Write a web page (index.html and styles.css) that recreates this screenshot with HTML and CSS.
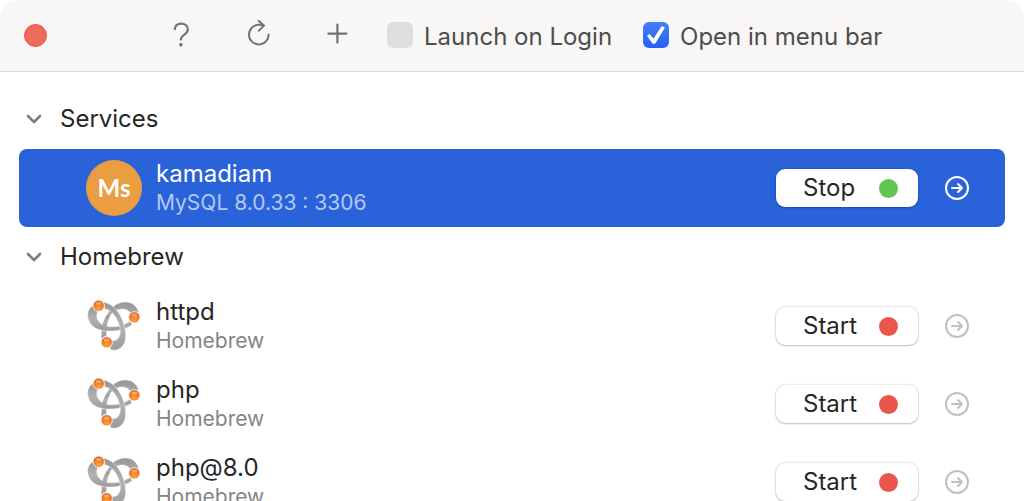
FILE: index.html
```html
<!DOCTYPE html>
<html lang="en">
<head>
<meta charset="utf-8">
<meta name="viewport" content="width=device-width, initial-scale=1">
<title>Services</title>
<link rel="stylesheet" href="styles.css">
</head>
<body>
<svg class="symbols" aria-hidden="true">
  <defs>
    <linearGradient id="metal" x1="0" y1="0" x2="0" y2="1">
      <stop offset="0" stop-color="#969696"/><stop offset=".5" stop-color="#b2b2b2"/><stop offset="1" stop-color="#9c9c9c"/>
    </linearGradient>
    <radialGradient id="ball" cx=".5" cy=".75" r=".7">
      <stop offset="0" stop-color="#ffa03c"/><stop offset=".55" stop-color="#f27e28"/><stop offset="1" stop-color="#dc5a22"/>
    </radialGradient>
  </defs>
  <symbol id="knot" viewBox="30 24 168 168">
    <g fill="url(#metal)" stroke="#f4f4f4" stroke-width="1.5" stroke-linejoin="round">
      <path d="M188 67C182 44 164 35 145 36C118 38 103 55 92 76C81 98 76 119 75 146L92 137C90 118 93 98 101 80C111 63 126 56 142 57C152 58 160 63 165 72Z"/>
      <path d="M50 47C36 56 32 72 37 88C44 112 67 122 94 123C120 124 146 120 168 105L163 93C145 106 121 112 99 110C82 109 67 98 63 83C61 73 63 68 69 61Z"/>
      <path d="M102 178C124 188 142 171 147 154C152 133 147 108 138 87C127 63 111 42 82 36L86 56C106 60 119 77 127 97C134 117 136 132 127 144C121 152 114 153 107 150Z"/>
      <path d="M102 79C95 91 91 103 90 116L76 117C79 102 84 89 92 76Z" stroke="none"/>
    </g>
    <g fill="url(#ball)" stroke="#fff" stroke-width="2.5">
      <circle cx="68" cy="47" r="17"/><circle cx="175" cy="82" r="17"/><circle cx="92" cy="157" r="17"/>
    </g>
    <g fill="#ffd0a0" fill-opacity=".5">
      <ellipse cx="68" cy="40" rx="9" ry="5"/><ellipse cx="175" cy="75" rx="9" ry="5"/><ellipse cx="92" cy="150" rx="9" ry="5"/>
    </g>
  </symbol>
  <symbol id="go" viewBox="0 0 26 26">
    <g fill="none" stroke="currentColor" stroke-width="2" stroke-linecap="round" stroke-linejoin="round">
      <circle cx="13" cy="13" r="11"/><path d="M8 13H18M14 9L18 13L14 17"/>
    </g>
  </symbol>
  <symbol id="chevron" viewBox="0 0 16 10">
    <path d="M2 2L8 8L14 2" fill="none" stroke="currentColor" stroke-width="2.6" stroke-linecap="round" stroke-linejoin="round"/>
  </symbol>
</svg>

<div class="window">
  <header class="toolbar">
    <button class="close" type="button" aria-label="Close"></button>
    <div class="tools">
      <button class="tool" type="button" aria-label="Help">
        <svg viewBox="0 0 30 30"><path d="M8.8 9.2C9.1 5.8 11.5 3.6 15.1 3.6C18.9 3.6 21.8 5.8 21.8 9.2C21.8 12 20.2 13.4 18.1 14.8C16 16.2 14.9 17.2 14.9 19.6" fill="none" stroke="currentColor" stroke-width="2.2" stroke-linecap="round"/><circle cx="14.9" cy="24.8" r="1.8" fill="currentColor"/></svg>
      </button>
      <button class="tool" type="button" aria-label="Refresh">
        <svg viewBox="0 0 30 30"><path d="M24.6 14.4A9.8 9.8 0 1 1 14.8 4.8C17 4.8 18.4 5.1 20 5.6M14.8 .9L20 5.6L14.8 10.6" fill="none" stroke="currentColor" stroke-width="2" stroke-linecap="round" stroke-linejoin="round"/></svg>
      </button>
      <button class="tool" type="button" aria-label="Add">
        <svg viewBox="0 0 30 30"><path d="M15.4 4.6V22.6M6.4 13.6H24.4" fill="none" stroke="currentColor" stroke-width="2.2" stroke-linecap="round"/></svg>
      </button>
    </div>
    <label class="option"><input class="check" type="checkbox">Launch on Login</label>
    <label class="option"><input class="check" type="checkbox" checked>Open in menu bar</label>
  </header>

  <main class="list">
    <section>
      <h2 class="group"><button class="toggle" type="button" aria-expanded="true"><svg class="chevron"><use href="#chevron"/></svg>Services</button></h2>
      <ul class="rows">
        <li class="row selected">
          <span class="badge">Ms</span>
          <div class="info"><div class="name">kamadiam</div><div class="detail">MySQL 8.0.33 : 3306</div></div>
          <button class="action" type="button">Stop<span class="dot running"></span></button>
          <button class="go" type="button" aria-label="Details"><svg><use href="#go"/></svg></button>
        </li>
      </ul>
    </section>
    <section>
      <h2 class="group"><button class="toggle" type="button" aria-expanded="true"><svg class="chevron"><use href="#chevron"/></svg>Homebrew</button></h2>
      <ul class="rows">
        <li class="row">
          <svg class="knot"><use href="#knot"/></svg>
          <div class="info"><div class="name">httpd</div><div class="detail">Homebrew</div></div>
          <button class="action" type="button">Start<span class="dot"></span></button>
          <button class="go" type="button" aria-label="Details"><svg><use href="#go"/></svg></button>
        </li>
        <li class="row">
          <svg class="knot"><use href="#knot"/></svg>
          <div class="info"><div class="name">php</div><div class="detail">Homebrew</div></div>
          <button class="action" type="button">Start<span class="dot"></span></button>
          <button class="go" type="button" aria-label="Details"><svg><use href="#go"/></svg></button>
        </li>
        <li class="row">
          <svg class="knot"><use href="#knot"/></svg>
          <div class="info"><div class="name">php@8.0</div><div class="detail">Homebrew</div></div>
          <button class="action" type="button">Start<span class="dot"></span></button>
          <button class="go" type="button" aria-label="Details"><svg><use href="#go"/></svg></button>
        </li>
      </ul>
    </section>
  </main>
</div>
</body>
</html>
```
FILE: styles.css
```css
* { box-sizing: border-box; }

body {
  margin: 0;
  background: #fff;
  color: #262626;
  font-family: Inter, "Liberation Sans", sans-serif;
  font-size: 24px;
  line-height: 30px;
}

button {
  margin: 0;
  padding: 0;
  border: 0;
  background: none;
  color: inherit;
  font: inherit;
}

.symbols { position: absolute; width: 0; height: 0; }

.window {
  display: flex;
  flex-direction: column;
  height: 100vh;
  overflow: hidden;
}

.toolbar {
  display: flex;
  flex: none;
  align-items: center;
  height: 72px;
  padding: 0 24px 2px;
  border-top: 1px solid #fcfcfb;
  border-bottom: 1px solid #dcdcdc;
  border-radius: 18px 18px 0 0;
  background: #f8f7f5;
  color: #4d4d4d;
}

.close {
  width: 23px;
  height: 23px;
  border: 1px solid #e0594f;
  border-radius: 50%;
  background: #ec6a5e;
}

.tools {
  display: flex;
  gap: 48px;
  margin: 0 35px 0 119px;
  color: #737373;
}

.tool, .tool svg { display: block; width: 30px; height: 30px; }

.option {
  display: flex;
  align-items: center;
  gap: 11px;
  margin-right: 31px;
  padding-top: 4px;
  white-space: nowrap;
}

.check {
  appearance: none;
  display: grid;
  place-items: center;
  width: 26px;
  height: 26px;
  margin: 0 0 4px;
  border-radius: 6px;
  background: #dededc;
}

.check:checked { background: linear-gradient(#4480f8, #2660f5); }

.check:checked::after {
  content: "";
  width: 18px;
  height: 18px;
  background: #fff;
  clip-path: polygon(0 55%, 13% 44%, 36% 70%, 82% 0, 99% 9%, 46% 97%, 31% 98%);
}

.list { flex: 1; min-height: 0; padding: 17px 19px 0; overflow: hidden; }

.group { margin: 0; font-size: 24px; font-weight: 400; }

.toggle { display: flex; align-items: center; gap: 18px; height: 60px; padding-left: 7px; }

.chevron { width: 16px; height: 10px; color: #7d7d7d; }

.rows { margin: 0; padding: 0; list-style: none; }

.row {
  display: flex;
  align-items: center;
  height: 78px;
  padding: 0 35px 0 67px;
  border-radius: 8px;
}

.badge, .knot { flex: none; width: 56px; height: 56px; }

.badge {
  display: grid;
  place-items: center;
  border-radius: 50%;
  background: #eb9d42;
  color: #fff;
  font-family: Lato, sans-serif;
  font-weight: 700;
}

.info { flex: 1; min-width: 0; margin-left: 14px; }

.name { line-height: 30px; }

.detail { color: #858585; font-size: 21px; line-height: 28px; }

.action {
  display: flex;
  align-items: center;
  justify-content: space-between;
  width: 142px;
  height: 38px;
  margin-right: 26px;
  padding: 0 20px 0 27px;
  border-radius: 9px;
  background: #fff;
  color: #262626;
  box-shadow: 0 0 2px rgba(0, 0, 0, .25), 0 1px 2px rgba(0, 0, 0, .2);
}

.dot { width: 19px; height: 19px; border-radius: 50%; background: #e9574c; }

.running { background: #62c655; }

.go, .go svg { display: block; width: 26px; height: 26px; }

.go { color: #c0c0c0; }

.selected { background: #2962d9; color: #fff; }

.selected .detail { color: #b4c8f2; }

.selected .go { color: #fff; }
```
